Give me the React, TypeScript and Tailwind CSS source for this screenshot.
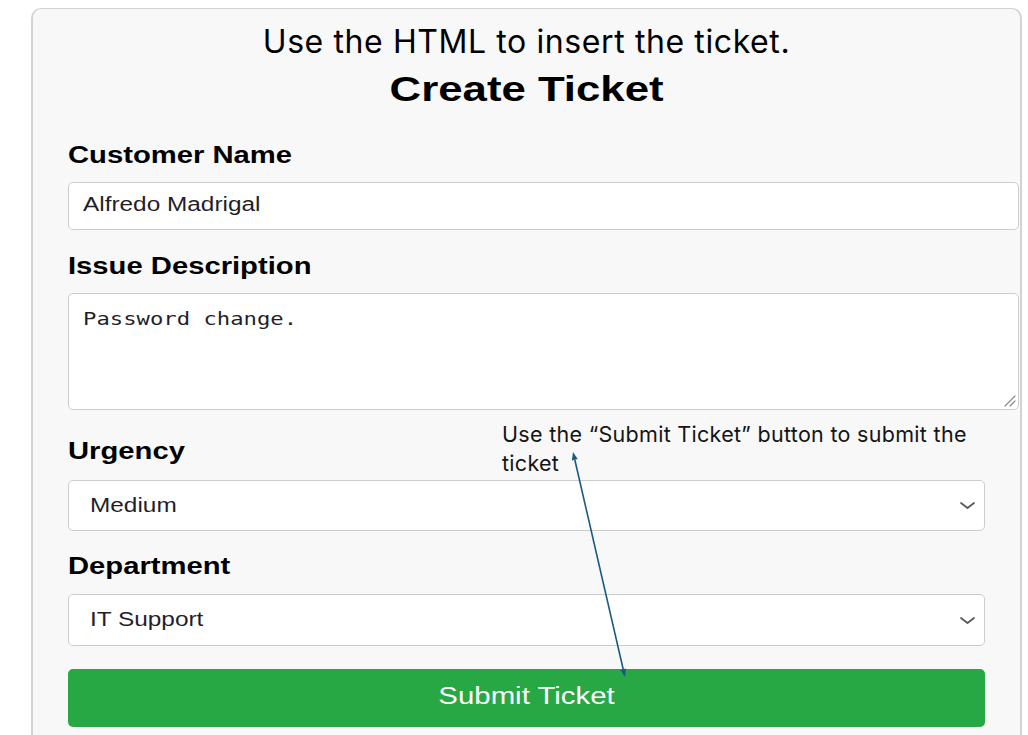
const arial = "font-['Liberation_Sans',Arial,sans-serif]";

function Label({ text, mt }: { text: string; mt: string }) {
  return (
    <div className={`${mt} text-[23px] leading-[28px] font-bold text-black`}>
      <span className="inline-block origin-left scale-x-[1.27]">{text}</span>
    </div>
  );
}

function Chevron() {
  return (
    <svg width="17" height="9" viewBox="0 0 17 9" className="shrink-0">
      <path d="M2 2 L8.5 7 L15 2" fill="none" stroke="#5a5a5a" strokeWidth="1.8" strokeLinecap="round" strokeLinejoin="round" />
    </svg>
  );
}

function Select({ value, mt, h }: { value: string; mt: string; h: string }) {
  return (
    <div className={`${mt} ${h} flex w-full items-center justify-between rounded-[5px] border-[1.5px] border-[#cdcdcd] bg-white pl-[21px] pr-[8px]`}>
      <span className="inline-block origin-left scale-x-[1.25] text-[19.5px] text-[#1f1f2a]">{value}</span>
      <Chevron />
    </div>
  );
}

export default function App() {
  return (
    <div className={`relative h-[735px] w-[1028px] overflow-hidden bg-white ${arial}`}>
      <div className="ml-[31px] mt-[8px] h-[760px] w-[991px] rounded-[10px] border border-x-2 border-[#d3d3d3] bg-[#f8f8f8] px-[35px] pt-[15px]">
        <div className="text-center font-['Inter',sans-serif] text-[32px] leading-[36px] tracking-[0.6px] text-black">
          Use the HTML to insert the ticket.
        </div>
        <div className="mt-[9px] text-center text-[35px] leading-[40px] font-bold text-black">
          <span className="inline-block scale-x-[1.25]">Create Ticket</span>
        </div>

        <Label text="Customer Name" mt="mt-[32px]" />
        <div className="mt-[13px] flex h-[48px] w-[951px] items-center rounded-[5px] border-[1.5px] border-[#cdcdcd] bg-white pb-[3px] pl-[14px]">
          <span className="inline-block origin-left scale-x-[1.25] text-[19.5px] text-[#1f1f2a]">Alfredo Madrigal</span>
        </div>

        <Label text="Issue Description" mt="mt-[22px]" />
        <div className="relative mt-[13px] h-[117px] w-[951px] rounded-[5px] border-[1.5px] border-[#cdcdcd] bg-white pl-[14px] pt-[14px]">
          <span className="inline-block origin-left scale-x-[1.27] font-['DejaVu_Sans_Mono',monospace] text-[17.5px] leading-[21px] text-[#1f1f2a]">
            Password change.
          </span>
          <svg width="14" height="14" viewBox="0 0 14 14" className="absolute bottom-[1px] right-[1px]">
            <path d="M2 12 L12 2 M7 12 L12 7" stroke="#8a8a8a" strokeWidth="1.2" strokeLinecap="round" />
          </svg>
        </div>

        <Label text="Urgency" mt="mt-[27px]" />
        <Select value="Medium" mt="mt-[15px]" h="h-[51px]" />

        <Label text="Department" mt="mt-[21px]" />
        <Select value="IT Support" mt="mt-[14px]" h="h-[52px]" />

        <div className="mt-[23px] flex h-[58px] w-full items-center justify-center rounded-[5px] bg-[#28a745] pb-[3px]">
          <span className="inline-block scale-x-[1.25] text-[23.5px] text-white">Submit Ticket</span>
        </div>
      </div>

      <div className="absolute left-[502px] top-[420px] font-['Inter',sans-serif] text-[21.5px] leading-[29px] tracking-[0.3px] text-[#141414]">
        Use the “Submit Ticket” button to submit the
        <br />
        ticket
      </div>

      <svg width="1028" height="735" className="pointer-events-none absolute left-0 top-0">
        <line x1="574.8" y1="459.8" x2="623.2" y2="669.2" stroke="#1b5b80" strokeWidth="1.6" />
        <polygon points="573,452 571.9,460.5 577.7,459.1" fill="#1b5b80" />
        <polygon points="625,677 620.3,669.9 626.1,668.5" fill="#1b5b80" />
      </svg>
    </div>
  );
}
